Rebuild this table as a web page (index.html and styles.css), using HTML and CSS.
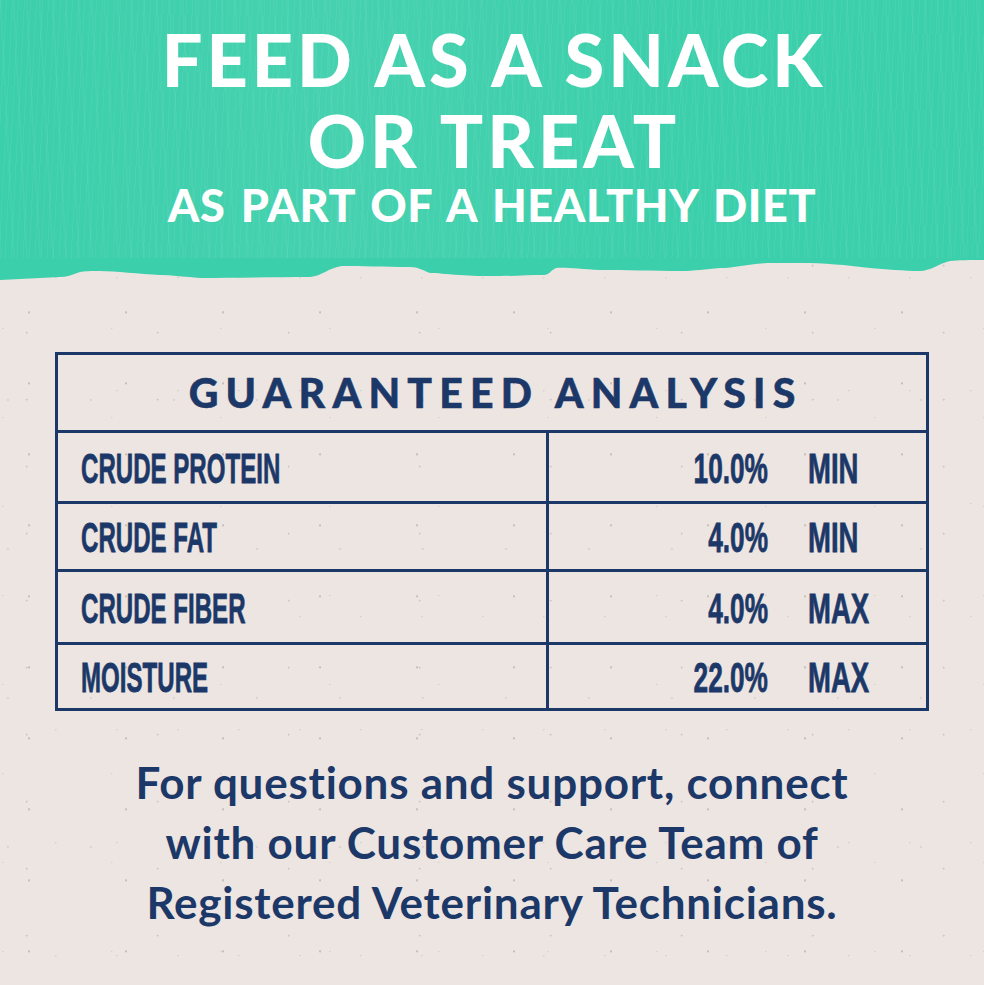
FILE: index.html
```html
<!DOCTYPE html>
<html lang="en">
<head>
<meta charset="utf-8">
<title>Guaranteed Analysis</title>
<link rel="stylesheet" href="styles.css">
</head>
<body>
<div class="page">
  <header class="hero">
    <h1 class="title">FEED AS A SNACK<br>OR TREAT</h1>
    <p class="subtitle">AS PART OF A HEALTHY DIET</p>
  </header>
  <svg class="edge" viewBox="0 0 984 26" preserveAspectRatio="none" aria-hidden="true">
    <path d="M0 0 H984 V2 C970 2 958 2 950 3 C938 6 930 13 920 13 C905 13 885 11 870 10 C845 7 825 5 800 5 C785 5 775 5 767 5 C748 6 735 10 720 10 C705 11 695 13 680 13 C655 13 625 12 600 12 C580 11 565 9 556 10 C550 13 549 17 544 17 C530 17 515 18 500 18 C485 18 470 18 460 17 C445 16 437 15 430 15 C422 12 418 9 410 9 C385 9 360 8 342 8 C328 10 322 18 310 19 C275 19 235 20 200 20 C185 19 172 17 160 17 C140 16 115 13 100 13 C90 13 85 13 80 14 C72 17 66 19 60 19 C40 20 20 21 0 22 Z"/>
  </svg>

  <main class="content">
    <section class="analysis">
      <div class="analysis-head"><h2>GUARANTEED ANALYSIS</h2></div>
      <div class="row r1">
        <div class="label"><span class="cond">CRUDE PROTEIN</span></div>
        <div class="value">
          <div class="num"><span class="cond-r">10.0%</span></div>
          <div class="unit"><span class="cond">MIN</span></div>
        </div>
      </div>
      <div class="row r2">
        <div class="label"><span class="cond">CRUDE FAT</span></div>
        <div class="value">
          <div class="num"><span class="cond-r">4.0%</span></div>
          <div class="unit"><span class="cond">MIN</span></div>
        </div>
      </div>
      <div class="row r3">
        <div class="label"><span class="cond">CRUDE FIBER</span></div>
        <div class="value">
          <div class="num"><span class="cond-r">4.0%</span></div>
          <div class="unit"><span class="cond">MAX</span></div>
        </div>
      </div>
      <div class="row r4">
        <div class="label"><span class="cond">MOISTURE</span></div>
        <div class="value">
          <div class="num"><span class="cond-r">22.0%</span></div>
          <div class="unit"><span class="cond">MAX</span></div>
        </div>
      </div>
    </section>

    <p class="support">For questions and support, connect<br>with our Customer Care Team of<br>Registered Veterinary Technicians.</p>
  </main>
</div>
</body>
</html>
```

FILE: styles.css
```css
html, body {
  margin: 0;
  padding: 0;
}

body {
  width: 984px;
  height: 985px;
  overflow: hidden;
  background-color: #ece5e1;
}

.page {
  width: 984px;
  height: 985px;
  background-color: #ece5e1;
  background-image:
    radial-gradient(circle at 30% 40%, rgba(120, 110, 106, 0.32) 0.8px, transparent 1.4px),
    radial-gradient(circle at 70% 20%, rgba(140, 130, 128, 0.22) 0.6px, transparent 1.1px),
    radial-gradient(circle at 15% 80%, rgba(125, 116, 112, 0.26) 0.7px, transparent 1.3px),
    radial-gradient(circle at 60% 65%, rgba(165, 155, 150, 0.22) 0.9px, transparent 1.5px),
    radial-gradient(circle at 85% 50%, rgba(130, 122, 118, 0.18) 0.6px, transparent 1.1px);
  background-size: 97px 71px, 61px 113px, 131px 67px, 83px 149px, 109px 89px;
  background-position: 0 0, 13px 29px, 7px 11px, 41px 5px, 19px 17px;
  overflow: hidden;
}

.hero {
  background-color: #3ccfab;
  background-image:
    repeating-linear-gradient(93deg, rgba(255, 255, 255, 0.05) 0 1px, transparent 1px 6px),
    repeating-linear-gradient(87deg, rgba(255, 255, 255, 0.04) 0 2px, transparent 2px 13px),
    linear-gradient(90deg, rgba(255, 255, 255, 0) 0%, rgba(255, 255, 255, 0.05) 35%, rgba(255, 255, 255, 0) 70%);
  padding: 19px 0 29px;
  text-align: center;
  color: #ffffff;
  font-family: Lato, "Open Sans", sans-serif;
}

.title {
  margin: 0;
  font-size: 72px;
  font-weight: 900;
  line-height: 81px;
  letter-spacing: 4px;
  padding-left: 4px;
}

.subtitle {
  margin: -1px 0 0;
  font-size: 45px;
  font-weight: 900;
  line-height: 50px;
  letter-spacing: 0.6px;
  word-spacing: 4px;
}

.edge {
  display: block;
  width: 984px;
  height: 26px;
  margin-top: -1px;
}

.edge path {
  fill: #3ccfab;
}

.content {
  padding-top: 68px;
  color: #1c3868;
}

.analysis {
  width: 868px;
  margin: 0 auto;
  border: 3px solid #1c3868;
}

.analysis-head {
  height: 75px;
  display: flex;
  align-items: center;
  justify-content: center;
  border-bottom: 3px solid #1c3868;
}

.analysis-head h2 {
  margin: 0;
  font-family: Lato, "Open Sans", sans-serif;
  font-size: 41px;
  font-weight: 900;
  letter-spacing: 7.2px;
  padding-left: 7.2px;
  line-height: 1;
  -webkit-text-stroke: 0.5px #1c3868;
}

.row {
  display: grid;
  grid-template-columns: 488px 1fr;
  font-family: "Liberation Sans", Arial, sans-serif;
  font-weight: 700;
  font-size: 43px;
  line-height: 1;
}

.row + .row {
  border-top: 3px solid #1c3868;
}

.r1 { height: 68px; }
.r2 { height: 65px; }
.r3 { height: 70px; }
.r4 { height: 63px; }

.label {
  display: flex;
  align-items: center;
  padding-left: 23px;
  padding-top: 2px;
}

.value {
  display: grid;
  grid-template-columns: 219px 1fr;
  column-gap: 40px;
  align-items: center;
  border-left: 3px solid #1c3868;
  padding-top: 2px;
}

.num {
  text-align: right;
}

.cond,
.cond-r {
  display: inline-block;
  white-space: nowrap;
  transform: scaleX(0.56);
  transform-origin: left center;
  -webkit-text-stroke: 0.8px #1c3868;
}

.cond-r {
  transform: scaleX(0.61);
  transform-origin: right center;
}

.unit .cond {
  transform: scaleX(0.64);
}

.support {
  margin: 41px 0 0;
  text-align: center;
  font-family: Lato, "Open Sans", sans-serif;
  font-weight: 700;
  font-size: 44px;
  line-height: 60px;
  letter-spacing: 0.75px;
}
```
